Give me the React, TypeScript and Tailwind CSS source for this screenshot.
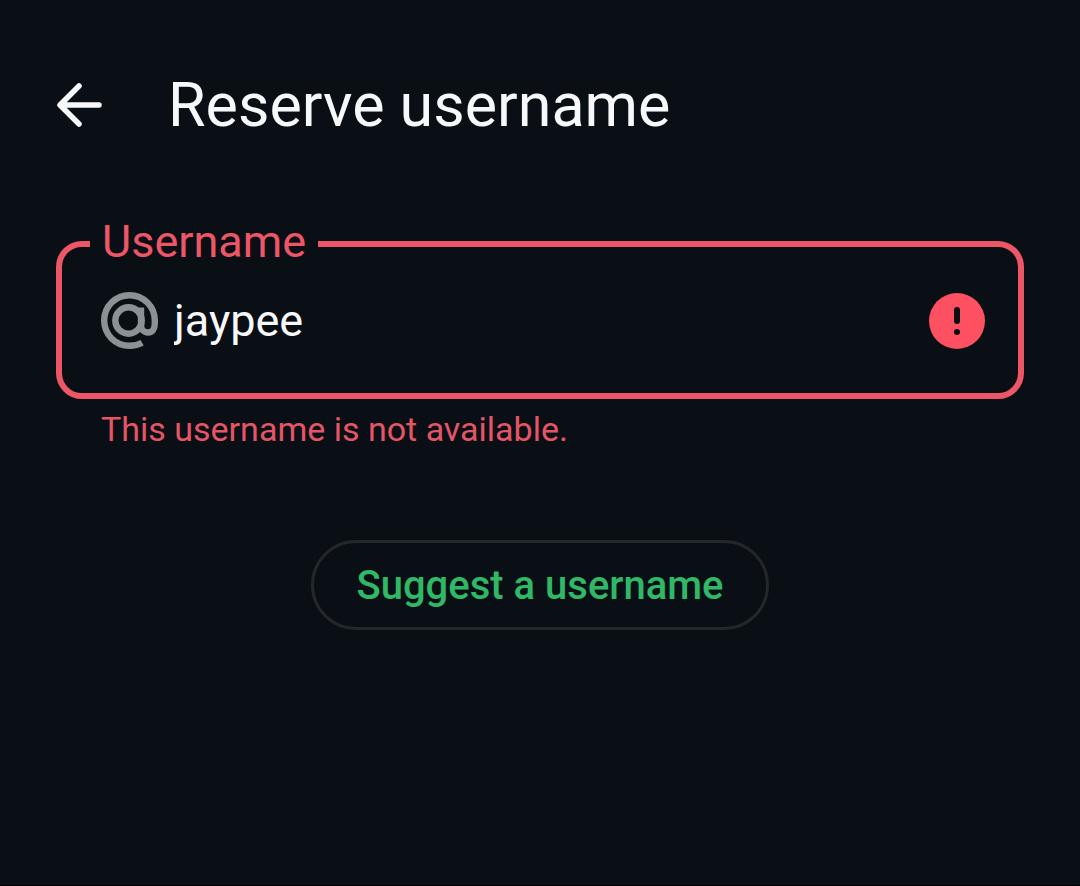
import React, { useState } from "react";

function BackIcon() {
  return (
    <svg className="size-12" viewBox="0 0 48 48" fill="none" stroke="currentColor" strokeWidth="5.5" strokeLinecap="round" strokeLinejoin="round" aria-hidden="true">
      <path d="M43 24H5M23 5 4 24l19 19" />
    </svg>
  );
}

function AtIcon() {
  return (
    <svg className="size-[57px] shrink-0 text-[#8b9296]" viewBox="0 0 57 57" fill="none" stroke="currentColor" strokeWidth="6.4" aria-hidden="true">
      <circle cx="27.5" cy="28.5" r="13.2" />
      <path d="M40 15.500V33c0 4.500 2.800 7.500 7 7.500 4.300 0 6.800-3.500 6.800-9v-3A25.300 25.300 0 1 0 28.500 53.800c4.700 0 8.700-.8 12.600-3" />
    </svg>
  );
}

function ErrorIcon() {
  return (
    <svg className="size-14 shrink-0" viewBox="0 0 56 56" role="img" aria-label="Error">
      <circle cx="28" cy="28" r="28" fill="#fd5060" />
      <rect x="25" y="14" width="6" height="17" rx="3" fill="#0a0f16" />
      <circle cx="28" cy="39" r="3" fill="#0a0f16" />
    </svg>
  );
}

export default function App() {
  const [username, setUsername] = useState("jaypee");

  return (
    <div className="min-h-screen border-b border-black bg-[#0a0f16] font-['Roboto',sans-serif] text-[#f7f8fa]">
      <header className="flex items-center gap-16 px-14 pt-[65px]">
        <button type="button" aria-label="Back" className="shrink-0">
          <BackIcon />
        </button>
        <h1 className="text-[61px] leading-[80px]">Reserve username</h1>
      </header>
      <main className="px-14 pt-[73px]">
        <fieldset className="min-w-0 rounded-[26px] border-[6px] border-[#ec5666] px-[39px] pb-11">
          <legend className="-ml-[11px] px-3 text-[45px] leading-[52px] text-[#ec5666]">
            <label htmlFor="username" className="block pb-1 leading-[48px]">Username</label>
          </legend>
          <div className="-mr-[6px] flex items-center gap-3 pt-[22px]">
            <AtIcon />
            <input
              id="username"
              type="text"
              value={username}
              onChange={(event) => setUsername(event.target.value)}
              aria-invalid="true"
              aria-describedby="username-error"
              className="h-14 min-w-0 flex-1 bg-transparent pl-1 text-[45px] leading-[56px] outline-none"
            />
            <ErrorIcon />
          </div>
        </fieldset>
        <p id="username-error" className="px-[45px] pt-2.5 text-[34px] leading-[40px] text-[#e45565]">
          This username is not available.
        </p>
        <div className="flex justify-center pt-[91px]">
          <button type="button" className="h-[90px] rounded-full border-[3px] border-[#24282b] px-[42px] pt-[2px] text-[40px] font-medium text-[#2fb866]">
            Suggest a username
          </button>
        </div>
      </main>
    </div>
  );
}
